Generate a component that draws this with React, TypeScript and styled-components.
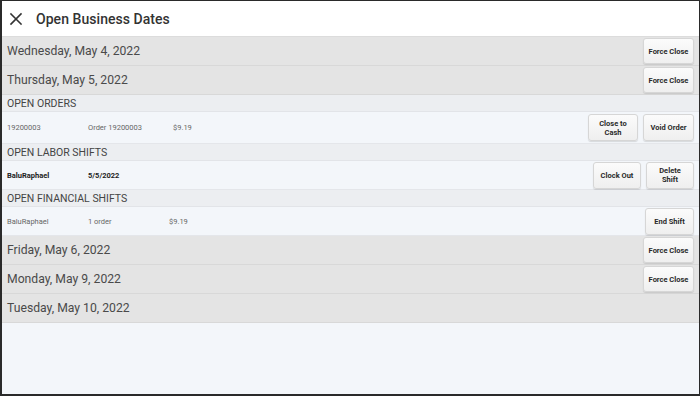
import React from "react";
import styled, { createGlobalStyle } from "styled-components";

const Global = createGlobalStyle`
  html, body { margin: 0; padding: 0; background: #ffffff; }
  * { box-sizing: border-box; }
`;

const Frame = styled.div`
  width: 700px;
  height: 396px;
  border: 1px solid #2a2a2a;
  border-left-width: 2px;
  border-bottom-width: 2px;
  background: #f3f6fa;
  display: flex;
  flex-direction: column;
  overflow: hidden;
  font-family: Roboto, "Liberation Sans", Arial, sans-serif;
`;

const Header = styled.div`
  height: 36px;
  flex: none;
  background: #ffffff;
  display: flex;
  align-items: center;
  padding-left: 7px;
  gap: 13px;
  border-bottom: 1px solid #dcdcdc;
`;

const Title = styled.div`
  font-size: 14px;
  font-weight: 500;
  color: #333;
  letter-spacing: 0.05px;
`;

const DateRow = styled.div`
  height: 29px;
  flex: none;
  background: #e4e4e4;
  border-bottom: 1px solid #d8d8d8;
  display: flex;
  align-items: center;
  justify-content: space-between;
  padding: 0 5px 0 5px;
`;

const DateText = styled.div`
  font-size: 12.2px;
  color: #4a4a4a;
`;

const SectionHead = styled.div`
  height: 17px;
  flex: none;
  background: #eceef1;
  border-bottom: 1px solid #e2e4e8;
  display: flex;
  align-items: center;
  padding-left: 5px;
  font-size: 10.5px;
  color: #444;
`;

const ItemRow = styled.div<{ $h: number }>`
  height: ${(p) => p.$h}px;
  flex: none;
  background: #f3f6fa;
  border-bottom: 1px solid #e4e6ea;
  display: flex;
  align-items: center;
  padding: 0 5px 0 5px;
`;

const Cell = styled.div<{ $w: number; $strong?: boolean }>`
  width: ${(p) => p.$w}px;
  flex: none;
  font-size: 7.5px;
  color: ${(p) => (p.$strong ? "#222" : "#666")};
  font-weight: ${(p) => (p.$strong ? 700 : 400)};
`;

const Spacer = styled.div`
  flex: 1;
`;

const Actions = styled.div`
  display: flex;
  gap: 5px;
`;

const Btn = styled.button<{ $w: number; $h?: number }>`
  width: ${(p) => p.$w}px;
  height: ${(p) => p.$h ?? 26}px;
  padding: 0 2px;
  border: 1px solid #d6d6d6;
  border-radius: 3px;
  background: linear-gradient(#fbfbfb, #efefef);
  box-shadow: 0 1px 1px rgba(0, 0, 0, 0.12);
  font-family: Roboto, "Liberation Sans", Arial, sans-serif;
  font-size: 7.5px;
  font-weight: 700;
  color: #2a2a2a;
  line-height: 9px;
  display: flex;
  align-items: center;
  justify-content: center;
  text-align: center;
`;

const CloseIcon = () => (
  <svg width="14" height="14" viewBox="0 0 14 14">
    <path d="M2 2 L12 12 M12 2 L2 12" stroke="#333" strokeWidth="1.6" strokeLinecap="square" />
  </svg>
);

const ForceClose = () => <Btn $w={51}>Force Close</Btn>;

export default function App() {
  return (
    <>
      <Global />
      <Frame>
        <Header>
          <CloseIcon />
          <Title>Open Business Dates</Title>
        </Header>
        <DateRow>
          <DateText>Wednesday, May 4, 2022</DateText>
          <ForceClose />
        </DateRow>
        <DateRow>
          <DateText>Thursday, May 5, 2022</DateText>
          <ForceClose />
        </DateRow>
        <SectionHead>OPEN ORDERS</SectionHead>
        <ItemRow $h={32}>
          <Cell $w={81}>19200003</Cell>
          <Cell $w={85}>Order 19200003</Cell>
          <Cell $w={60}>$9.19</Cell>
          <Spacer />
          <Actions>
            <Btn $w={50} $h={27}>Close to<br />Cash</Btn>
            <Btn $w={51} $h={27}>Void Order</Btn>
          </Actions>
        </ItemRow>
        <SectionHead>OPEN LABOR SHIFTS</SectionHead>
        <ItemRow $h={29}>
          <Cell $w={81} $strong>BaluRaphael</Cell>
          <Cell $w={85} $strong>5/5/2022</Cell>
          <Spacer />
          <Actions>
            <Btn $w={48} $h={27}>Clock Out</Btn>
            <Btn $w={48} $h={27}>Delete<br />Shift</Btn>
          </Actions>
        </ItemRow>
        <SectionHead>OPEN FINANCIAL SHIFTS</SectionHead>
        <ItemRow $h={29}>
          <Cell $w={81}>BaluRaphael</Cell>
          <Cell $w={81}>1 order</Cell>
          <Cell $w={60}>$9.19</Cell>
          <Spacer />
          <Btn $w={49} $h={27}>End Shift</Btn>
        </ItemRow>
        <DateRow>
          <DateText>Friday, May 6, 2022</DateText>
          <ForceClose />
        </DateRow>
        <DateRow>
          <DateText>Monday, May 9, 2022</DateText>
          <ForceClose />
        </DateRow>
        <DateRow>
          <DateText>Tuesday, May 10, 2022</DateText>
        </DateRow>
      </Frame>
    </>
  );
}
